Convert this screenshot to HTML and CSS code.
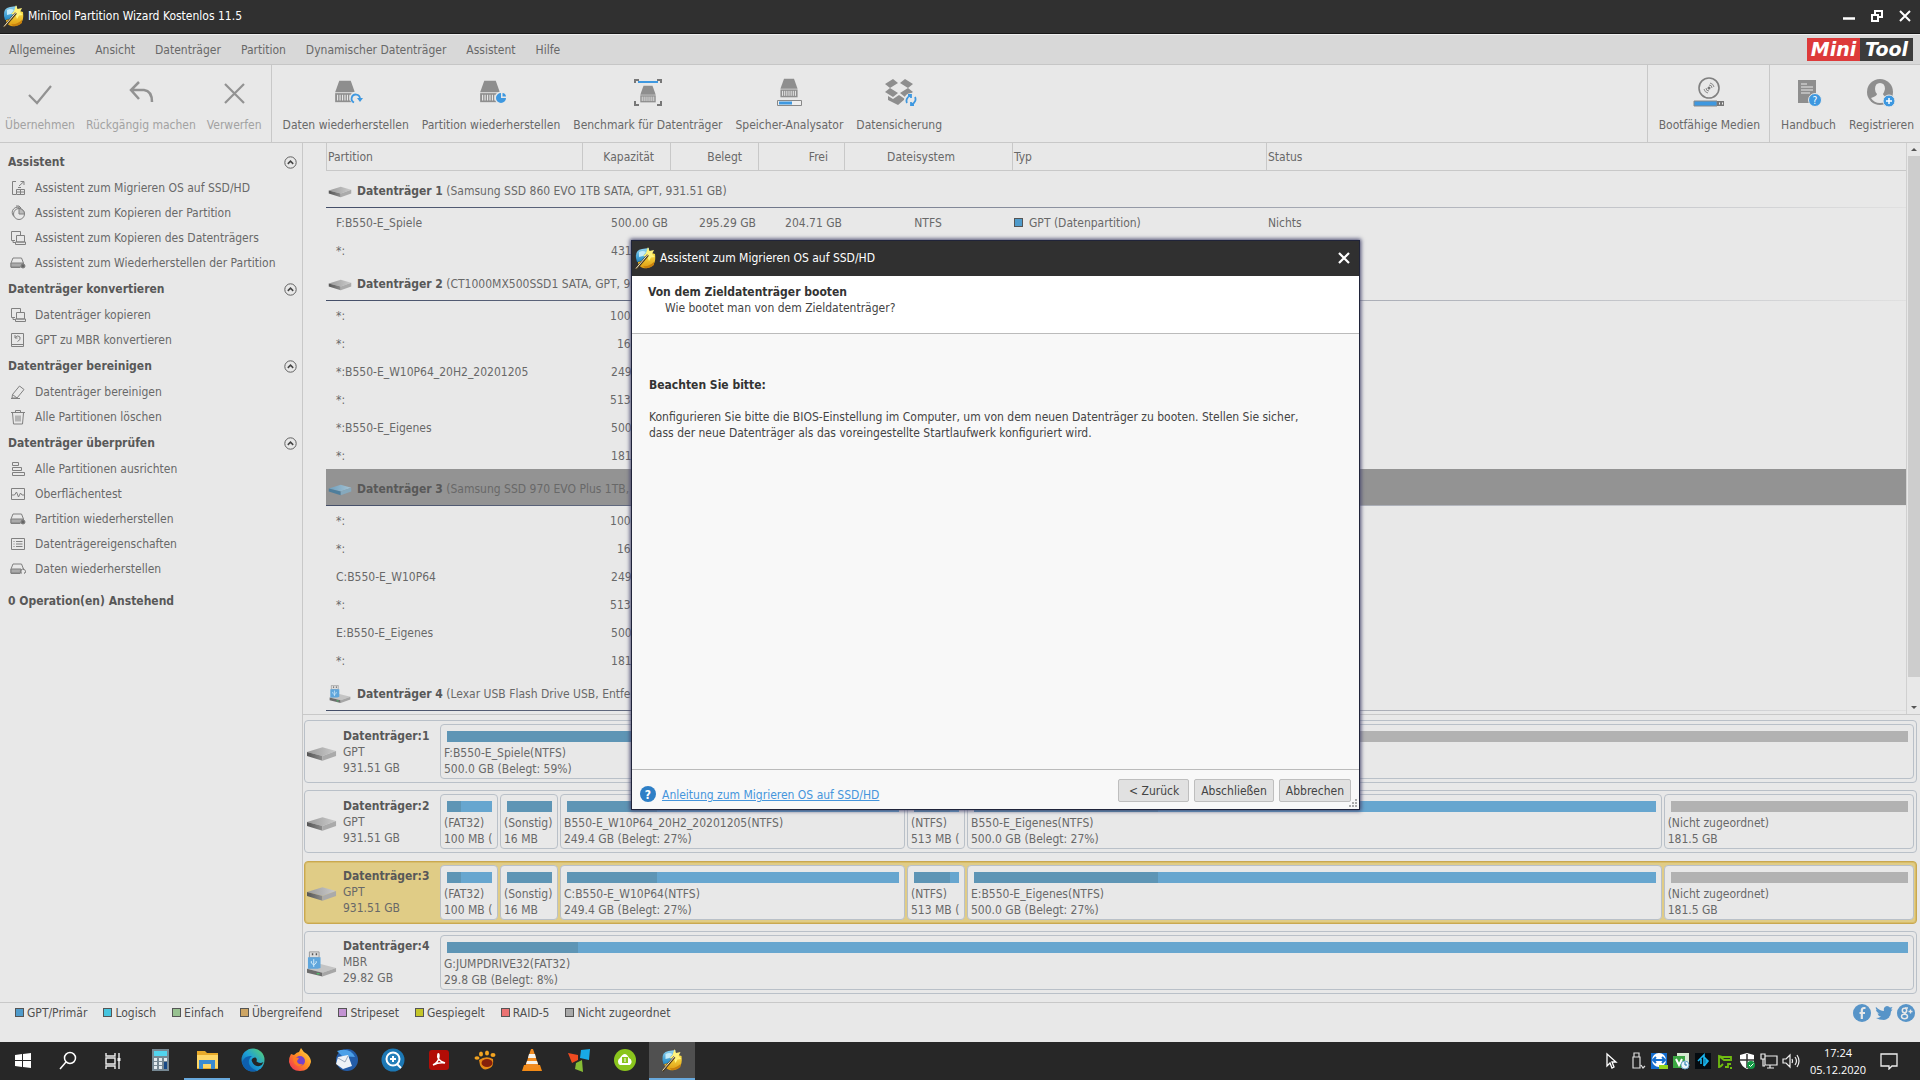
FILE: index.html
```
<!DOCTYPE html>
<html lang="de">
<head>
    <meta charset="UTF-8">
    <meta name="viewport" content="width=device-width, initial-scale=1.0">
    <title>MiniTool Partition Wizard Kostenlos 11.5</title>
    <link rel="stylesheet" href="styles.css">
</head>
<body>
    <!-- Shared icons -->
    <svg class="sprite" aria-hidden="true">
        <defs>
            <linearGradient id="metal" x1="0" x2="1"><stop offset="0" stop-color="#9a9a9a"/><stop offset="1" stop-color="#cbcbcb"/></linearGradient>
            <linearGradient id="metal-side" x1="0" x2="1"><stop offset="0" stop-color="#555"/><stop offset="1" stop-color="#8c8c8c"/></linearGradient>
            <linearGradient id="bluedisk" x1="0" x2="1"><stop offset="0" stop-color="#6f9fbd"/><stop offset="1" stop-color="#a5c3d4"/></linearGradient>
            <linearGradient id="globe" x1="0" y1="0" x2="0" y2="1"><stop offset="0" stop-color="#8fd4f2"/><stop offset="1" stop-color="#1f87c4"/></linearGradient>
            <linearGradient id="gold" x1="0" y1="0" x2="0" y2="1"><stop offset="0" stop-color="#ffe94f"/><stop offset="1" stop-color="#dd9a10"/></linearGradient>
            <linearGradient id="edgefill" x1="0" y1="1" x2="1" y2="0"><stop offset="0" stop-color="#0c59a4"/><stop offset="0.5" stop-color="#1d9fd8"/><stop offset="1" stop-color="#5fd668"/></linearGradient>
            <linearGradient id="firefill" x1="1" y1="0" x2="0" y2="1"><stop offset="0" stop-color="#ffe14a"/><stop offset="0.5" stop-color="#ff8a1f"/><stop offset="1" stop-color="#f0245f"/></linearGradient>
        </defs>
        <symbol id="app" viewBox="0 0 21 24">
            <path d="M1 12Q0 4 7 3l7-1-1 7-6 6-5 1z" fill="url(#globe)"/>
            <path d="M4 6q4-2 7 0l-3 4-4 1z" fill="#c5ecfa"/>
            <path d="M13 6l7 2q1 8-2 11-4 4-10 3-5-2-5-6l6-1z" fill="url(#gold)"/>
            <path d="M8 20q6 1 11-4v3q-4 4-9 3z" fill="#c8810e"/>
            <path d="M13 1l1.500 4L19 4l-2 4 3 3-4 .500-2 3.500-1.500-4L8 10l3-3z" fill="#fff37c"/>
            <path d="M1 23L13 9" stroke="#4a3a1d" stroke-width="2.400"/>
            <path d="M1 22.500L13 8.500" stroke="#efe6cc" stroke-width="1"/>
        </symbol>
        <symbol id="hdd" viewBox="0 0 32 16">
            <path d="M1 6L17 1l14 4-14 5z" fill="url(#metal)"/>
            <path d="M1 6l16 4v5L1 10z" fill="url(#metal-side)"/>
            <path d="M17 10l14-5v5l-14 5z" fill="#aaa"/>
        </symbol>
        <symbol id="hdd-blue" viewBox="0 0 32 16">
            <path d="M1 6L17 1l14 4-14 5z" fill="url(#bluedisk)"/>
            <path d="M1 6l16 4v5L1 10z" fill="#4e7e9c"/>
            <path d="M17 10l14-5v5l-14 5z" fill="#86a9bd"/>
        </symbol>
        <symbol id="usb-disk" viewBox="0 0 32 26">
            <path d="M1 18l14-5 16 4-14 5z" fill="#c4c4c4"/>
            <path d="M1 18l16 4v4L1 22z" fill="#6d6d6d"/>
            <path d="M17 22l14-5v4l-14 5z" fill="#a6a6a6"/>
            <path d="M11 23h3" stroke="#53b96b" stroke-width="1.500"/>
            <path d="M3.500.500h10v6h-10z" fill="#ddd" stroke="#999"/>
            <path d="M6 3h1.500M10 3h1.500" stroke="#555" stroke-width="2"/>
            <path d="M2 6h13v11l-3 1H2z" fill="#5fa6dc"/>
            <path d="M8 8v8M5.500 10v2l2.500 2 2.500-2v-2" fill="none" stroke="#d5ecfa"/>
        </symbol>
        <symbol id="up" viewBox="0 0 13 13">
            <circle cx="6.500" cy="6.500" r="5.700" fill="none" stroke="#606060"/>
            <path d="M3.800 7.800l2.700-2.600 2.700 2.600" fill="none" stroke="#444" stroke-width="1.600"/>
        </symbol>
        <symbol id="i-migrate" viewBox="0 0 16 16">
            <path d="M6 1.500H2.500v13H6M9 6l5-4.500M10.500 1.500H14v3.500M6.500 9.500h8v5h-8zM6.500 12h8M10.500 9.500v5M8 7.500h3" fill="none"/>
        </symbol>
        <symbol id="i-pie" viewBox="0 0 16 16">
            <path d="M4 11.500A5 5 0 1 1 11 3.500" fill="none"/>
            <circle cx="9" cy="9" r="5.500" fill="none"/>
            <path d="M9 3.500V9h5.500A5.500 5.500 0 0 0 9 3.500M6 1h3l2 2" fill="#bbb"/>
        </symbol>
        <symbol id="i-copy" viewBox="0 0 16 16">
            <path d="M5 10.500H1.500v-9h9V5M3 10.500v2h3" fill="none"/>
            <path d="M6.500 5.500h8v6.500h-8zM5.500 12h10v2.500h-10z" fill="none"/>
        </symbol>
        <symbol id="i-restore" viewBox="0 0 16 16">
            <path d="M1 8l2-5h8.500l2 5v1M1 8v4.500h9" fill="none"/>
            <path d="M1 8h12v4H1z" fill="#aaa"/>
            <circle cx="13" cy="11" r="2" fill="#666"/>
        </symbol>
        <symbol id="i-data" viewBox="0 0 16 16">
            <path d="M1 8l2-5h8.500l2 5v1M1 8v4.500h9" fill="none"/>
            <path d="M1 8h10v4H1z" fill="#aaa"/>
            <path d="M11.500 12.500a2.500 2.500 0 1 1 3 0l1-2" fill="none"/>
        </symbol>
        <symbol id="i-mbr" viewBox="0 0 16 16">
            <path d="M1.500 1.500h12v13h-12zM1.500 12.500h12M5 5.500q3-3 5-.500 1 3-2.500 4.500M5 3v3h2.500" fill="none"/>
        </symbol>
        <symbol id="i-erase" viewBox="0 0 16 16">
            <path d="M2.500 10.500l7-8.500 4.500 3.500-7 8.500H2l.500-3.500 4.500 3.500M1 14.500h9" fill="none"/>
        </symbol>
        <symbol id="i-trash" viewBox="0 0 16 16">
            <path d="M1 3.500h14M5.500 3V1.500h5V3M2.500 4l1 11h9l1-11M6 6.500v6M8 6.500v6M10 6.500v6" fill="none"/>
        </symbol>
        <symbol id="i-align" viewBox="0 0 16 16">
            <path d="M2.500 1.500h6v3h-6zM2.500 6.500h9v3h-9zM2.500 11.500h12v3h-12z" fill="none"/>
        </symbol>
        <symbol id="i-surface" viewBox="0 0 16 16">
            <path d="M1.500 2.500h13v11h-13zM1.500 9h3l2-3 2 5 2-4 1.500 2h2.500" fill="none"/>
        </symbol>
        <symbol id="i-props" viewBox="0 0 16 16">
            <path d="M1.500 2.500h13v11h-13zM3.500 5.500h1M6 5.500h6.500M3.500 8h1M6 8h6.500M3.500 10.500h1M6 10.500h6.500" fill="none"/>
        </symbol>
        <symbol id="disk-body" viewBox="0 0 26 28">
            <path d="M6 1h14l5 14H1z" fill="#8e8e8e"/>
            <path d="M1 16h24v11H1z" fill="#8e8e8e"/>
            <path d="M4 18v7M7 18v7M10 18v7M13 18v7M16 18v7M19 18v7M22 18v7" stroke="#e8e8e8" stroke-width="1.400"/>
        </symbol>
    </svg>

    <!-- Main window -->
    <div class="window">
        <header class="title-bar">
            <svg class="title-icon"><use href="#app"/></svg>
            <h1>MiniTool Partition Wizard Kostenlos 11.5</h1>
            <div class="window-buttons">
                <button aria-label="Minimieren"><svg viewBox="0 0 14 14"><path d="M1 9.500h12" stroke="#fff" stroke-width="2.500"/></svg></button>
                <button aria-label="Wiederherstellen"><svg viewBox="0 0 14 14"><path d="M2 6h6v6H2zM5 5V2h7v6H9" fill="none" stroke="#fff" stroke-width="2"/></svg></button>
                <button aria-label="Schließen"><svg viewBox="0 0 14 14"><path d="M2 2l10 10M12 2L2 12" stroke="#fff" stroke-width="2"/></svg></button>
            </div>
        </header>

        <nav class="menu-bar">
            <button>Allgemeines</button>
            <button>Ansicht</button>
            <button>Datenträger</button>
            <button>Partition</button>
            <button>Dynamischer Datenträger</button>
            <button>Assistent</button>
            <button>Hilfe</button>
            <div class="brand"><span class="brand-red">Mini</span><span class="brand-dark">Tool</span></div>
        </nav>

        <div class="toolbar">
            <div class="tool-group">
                <button class="tool" disabled><svg viewBox="0 0 36 36"><path d="M7 20l8 8L29 11" fill="none" stroke="#929292" stroke-width="2.200"/></svg>Übernehmen</button>
                <button class="tool" disabled><svg viewBox="0 0 36 36"><path d="M16 7l-8 8 8 9M9 15h12q8 1 8 12" fill="none" stroke="#929292" stroke-width="2.500"/></svg>Rückgängig machen</button>
                <button class="tool" disabled><svg viewBox="0 0 36 36"><path d="M9 9l19 19M28 9L9 28" stroke="#929292" stroke-width="2.200"/></svg>Verwerfen</button>
            </div>
            <div class="tool-group tool-group-disk">
                <button class="tool"><svg viewBox="0 0 36 36"><use href="#disk-body" x="4" y="5" width="26" height="23"/><circle cx="28" cy="23" r="6.500" fill="#e8e8e8"/><path d="M26 27.500a4.200 4.200 0 1 1 6-4" fill="none" stroke="#3e98e0" stroke-width="1.800"/><path d="M29 23h6l-3 4z" fill="#3e98e0"/></svg>Daten wiederherstellen</button>
                <button class="tool"><svg viewBox="0 0 36 36"><use href="#disk-body" x="4" y="5" width="26" height="23"/><circle cx="28" cy="23" r="6.500" fill="#e8e8e8"/><path d="M28 23v-5a5 5 0 1 0 5 5z" fill="#3e98e0"/><path d="M29.500 21.500V18a4 4 0 0 1 3.500 3.500z" fill="#3e98e0"/></svg>Partition wiederherstellen</button>
                <button class="tool"><svg viewBox="0 0 36 36"><use href="#disk-body" x="6" y="10" width="24" height="18"/><path d="M5 8V5h4M27 5h4v3M5 26v4h4M27 30h4v-4" fill="none" stroke="#777" stroke-width="2"/><path d="M8 7h20" stroke="#3e98e0" stroke-width="2"/></svg>Benchmark für Datenträger</button>
                <button class="tool"><svg viewBox="0 0 36 36"><use href="#disk-body" x="5" y="3" width="26" height="20"/><path d="M6.500 25.500h24v5h-24z" fill="#eee" stroke="#888"/><path d="M8 28h13" stroke="#3e98e0" stroke-width="3"/></svg>Speicher-Analysator</button>
                <button class="tool"><svg viewBox="0 0 36 36"><path d="M4 9l8-5 5 4-8 5zM19 8l5-4 8 5-5 4zM4 17l5-4 8 5-5 4zM27 13l5 4-8 5-5-4zM7 21l5 3 6-4 6 4-7 6-10-5z" fill="#8e8e8e"/><circle cx="30" cy="25" r="7" fill="#e8e8e8"/><path d="M26 28a5 5 0 0 1 3-7M34 22a5 5 0 0 1-3 7M27 20h3v3M33 30h-3v-3" fill="none" stroke="#3e98e0" stroke-width="1.800"/></svg>Datensicherung</button>
            </div>
            <div class="tool-group tool-group-media">
                <button class="tool"><svg viewBox="0 0 36 36"><circle cx="18" cy="13" r="10" fill="none" stroke="#808080" stroke-width="1.600"/><circle cx="18" cy="13" r="1.500" fill="#777"/><path d="M13 14a5 5 0 0 0 4 4M19 8a5 5 0 0 1 4 4M18 10a3 3 0 0 1 3 3M15 13a3 3 0 0 0 3 3" fill="none" stroke="#888"/><path d="M3 26h23v5H3z" fill="#3e98e0" stroke="#888"/><path d="M26 26h7v5h-7z" fill="#777"/><path d="M28 28.500h1M31 28.500h1" stroke="#eee" stroke-width="2"/></svg>Bootfähige Medien</button>
            </div>
            <div class="tool-group tool-group-help">
                <button class="tool"><svg viewBox="0 0 36 36"><path d="M8 5h18v23H8z" fill="#8e8e8e"/><path d="M11 9h6M11 12h12M11 15h12M11 18h9" stroke="#e8e8e8"/><circle cx="25" cy="25" r="6.500" fill="#3e98e0" stroke="#e8e8e8"/><text x="25" y="29" text-anchor="middle" font-size="10" fill="#fff">?</text></svg>Handbuch</button>
                <button class="tool"><svg viewBox="0 0 36 36"><circle cx="17" cy="17" r="13" fill="#8e8e8e"/><path d="M17 8q5 0 5 6-1 4-2 5 0 2 6 4-3 5-9 5t-9-5q6-2 6-4-2-2-2-5 0-6 5-6z" fill="#e8e8e8"/><circle cx="26" cy="26" r="6" fill="#3e98e0" stroke="#e8e8e8"/><path d="M23 26h6M26 23v6" stroke="#fff" stroke-width="1.500"/></svg>Registrieren</button>
            </div>
        </div>

        <div class="workspace">
            <!-- Action list -->
            <aside class="sidebar">
                <section>
                    <h2>Assistent <svg><use href="#up"/></svg></h2>
                    <button><svg><use href="#i-migrate"/></svg>Assistent zum Migrieren OS auf SSD/HD</button>
                    <button><svg><use href="#i-pie"/></svg>Assistent zum Kopieren der Partition</button>
                    <button><svg><use href="#i-copy"/></svg>Assistent zum Kopieren des Datenträgers</button>
                    <button><svg><use href="#i-restore"/></svg>Assistent zum Wiederherstellen der Partition</button>
                </section>
                <section>
                    <h2>Datenträger konvertieren <svg><use href="#up"/></svg></h2>
                    <button><svg><use href="#i-copy"/></svg>Datenträger kopieren</button>
                    <button><svg><use href="#i-mbr"/></svg>GPT zu MBR konvertieren</button>
                </section>
                <section>
                    <h2>Datenträger bereinigen <svg><use href="#up"/></svg></h2>
                    <button><svg><use href="#i-erase"/></svg>Datenträger bereinigen</button>
                    <button><svg><use href="#i-trash"/></svg>Alle Partitionen löschen</button>
                </section>
                <section>
                    <h2>Datenträger überprüfen <svg><use href="#up"/></svg></h2>
                    <button><svg><use href="#i-align"/></svg>Alle Partitionen ausrichten</button>
                    <button><svg><use href="#i-surface"/></svg>Oberflächentest</button>
                    <button><svg><use href="#i-restore"/></svg>Partition wiederherstellen</button>
                    <button><svg><use href="#i-props"/></svg>Datenträgereigenschaften</button>
                    <button><svg><use href="#i-data"/></svg>Daten wiederherstellen</button>
                </section>
                <p class="pending">0 Operation(en) Anstehend</p>
            </aside>

            <main class="content">
                <!-- Partition list -->
                <div class="list">
                    <table class="partitions">
                        <colgroup>
                            <col class="c-name"><col class="c-size"><col class="c-size"><col class="c-free"><col class="c-fs"><col class="c-type"><col>
                        </colgroup>
                        <thead>
                            <tr><th>Partition</th><th class="num">Kapazität</th><th class="num">Belegt</th><th class="num">Frei</th><th class="fs">Dateisystem</th><th>Typ</th><th>Status</th></tr>
                        </thead>
                        <tbody>
                            <tr class="disk"><th colspan="7"><svg><use href="#hdd"/></svg><b>Datenträger 1</b> (Samsung SSD 860 EVO 1TB SATA, GPT, 931.51 GB)</th></tr>
                            <tr><td>F:B550-E_Spiele</td><td class="num">500.00 GB</td><td class="num">295.29 GB</td><td class="num">204.71 GB</td><td class="fs">NTFS</td><td class="type"><i class="swatch primary"></i>GPT (Datenpartition)</td><td>Nichts</td></tr>
                            <tr><td>*:</td><td class="num">431.51 GB</td><td></td><td></td><td></td><td></td><td></td></tr>
                            <tr class="disk"><th colspan="7"><svg><use href="#hdd"/></svg><b>Datenträger 2</b> (CT1000MX500SSD1 SATA, GPT, 931.51 GB)</th></tr>
                            <tr><td>*:</td><td class="num">100.00 MB</td><td></td><td></td><td></td><td></td><td></td></tr>
                            <tr><td>*:</td><td class="num">16.00 MB</td><td></td><td></td><td></td><td></td><td></td></tr>
                            <tr><td>*:B550-E_W10P64_20H2_20201205</td><td class="num">249.40 GB</td><td></td><td></td><td></td><td></td><td></td></tr>
                            <tr><td>*:</td><td class="num">513.00 MB</td><td></td><td></td><td></td><td></td><td></td></tr>
                            <tr><td>*:B550-E_Eigenes</td><td class="num">500.00 GB</td><td></td><td></td><td></td><td></td><td></td></tr>
                            <tr><td>*:</td><td class="num">181.50 GB</td><td></td><td></td><td></td><td></td><td></td></tr>
                            <tr class="disk selected"><th colspan="7"><svg><use href="#hdd-blue"/></svg><b>Datenträger 3</b> (Samsung SSD 970 EVO Plus 1TB, GPT, 931.51 GB)</th></tr>
                            <tr><td>*:</td><td class="num">100.00 MB</td><td></td><td></td><td></td><td></td><td></td></tr>
                            <tr><td>*:</td><td class="num">16.00 MB</td><td></td><td></td><td></td><td></td><td></td></tr>
                            <tr><td>C:B550-E_W10P64</td><td class="num">249.40 GB</td><td></td><td></td><td></td><td></td><td></td></tr>
                            <tr><td>*:</td><td class="num">513.00 MB</td><td></td><td></td><td></td><td></td><td></td></tr>
                            <tr><td>E:B550-E_Eigenes</td><td class="num">500.00 GB</td><td></td><td></td><td></td><td></td><td></td></tr>
                            <tr><td>*:</td><td class="num">181.50 GB</td><td></td><td></td><td></td><td></td><td></td></tr>
                            <tr class="disk"><th colspan="7"><svg class="usb"><use href="#usb-disk"/></svg><b>Datenträger 4</b> (Lexar USB Flash Drive USB, Entfernbar, MBR, 29.82 GB)</th></tr>
                        </tbody>
                    </table>
                    <div class="scrollbar">
                        <svg viewBox="0 0 6 4"><path d="M0 4l3-3 3 3z" fill="#555"/></svg>
                        <div class="thumb"></div>
                        <svg viewBox="0 0 6 4"><path d="M0 0l3 3 3-3z" fill="#555"/></svg>
                    </div>
                </div>

                <!-- Disk map -->
                <div class="disk-map">
                    <div class="drive">
                        <svg><use href="#hdd"/></svg>
                        <div class="drive-info"><b>Datenträger:1</b><br>GPT<br>931.51 GB</div>
                        <div class="blocks">
                            <div class="block" style="flex-grow: 500"><div class="bar"><div class="used" style="width: 59%"></div></div>F:B550-E_Spiele(NTFS)<br>500.0 GB (Belegt: 59%)</div>
                            <div class="block" style="flex-grow: 431"><div class="bar free"></div>(Nicht zugeordnet)<br>431.5 GB</div>
                        </div>
                    </div>
                    <div class="drive">
                        <svg><use href="#hdd"/></svg>
                        <div class="drive-info"><b>Datenträger:2</b><br>GPT<br>931.51 GB</div>
                        <div class="blocks">
                            <div class="block small"><div class="bar"><div class="used" style="width: 30%"></div></div>(FAT32)<br>100 MB (</div>
                            <div class="block small"><div class="bar"><div class="used" style="width: 100%"></div></div>(Sonstig)<br>16 MB</div>
                            <div class="block" style="flex-grow: 245"><div class="bar"><div class="used" style="width: 27%"></div></div>B550-E_W10P64_20H2_20201205(NTFS)<br>249.4 GB (Belegt: 27%)</div>
                            <div class="block small"><div class="bar"><div class="used" style="width: 81%"></div></div>(NTFS)<br>513 MB (</div>
                            <div class="block" style="flex-grow: 500"><div class="bar"><div class="used" style="width: 27%"></div></div>B550-E_Eigenes(NTFS)<br>500.0 GB (Belegt: 27%)</div>
                            <div class="block" style="flex-grow: 176"><div class="bar free"></div>(Nicht zugeordnet)<br>181.5 GB</div>
                        </div>
                    </div>
                    <div class="drive active">
                        <svg><use href="#hdd"/></svg>
                        <div class="drive-info"><b>Datenträger:3</b><br>GPT<br>931.51 GB</div>
                        <div class="blocks">
                            <div class="block small"><div class="bar"><div class="used" style="width: 30%"></div></div>(FAT32)<br>100 MB (</div>
                            <div class="block small"><div class="bar"><div class="used" style="width: 100%"></div></div>(Sonstig)<br>16 MB</div>
                            <div class="block" style="flex-grow: 245"><div class="bar"><div class="used" style="width: 27%"></div></div>C:B550-E_W10P64(NTFS)<br>249.4 GB (Belegt: 27%)</div>
                            <div class="block small"><div class="bar"><div class="used" style="width: 81%"></div></div>(NTFS)<br>513 MB (</div>
                            <div class="block" style="flex-grow: 500"><div class="bar"><div class="used" style="width: 27%"></div></div>E:B550-E_Eigenes(NTFS)<br>500.0 GB (Belegt: 27%)</div>
                            <div class="block" style="flex-grow: 176"><div class="bar free"></div>(Nicht zugeordnet)<br>181.5 GB</div>
                        </div>
                    </div>
                    <div class="drive">
                        <svg class="usb"><use href="#usb-disk"/></svg>
                        <div class="drive-info"><b>Datenträger:4</b><br>MBR<br>29.82 GB</div>
                        <div class="blocks">
                            <div class="block" style="flex-grow: 1"><div class="bar"><div class="used" style="width: 9%"></div></div>G:JUMPDRIVE32(FAT32)<br>29.8 GB (Belegt: 8%)</div>
                        </div>
                    </div>
                </div>
            </main>
        </div>

        <footer class="status-bar">
            <ul class="legend">
                <li><i class="swatch primary"></i>GPT/Primär</li>
                <li><i class="swatch logical"></i>Logisch</li>
                <li><i class="swatch simple"></i>Einfach</li>
                <li><i class="swatch spanned"></i>Übergreifend</li>
                <li><i class="swatch striped"></i>Stripeset</li>
                <li><i class="swatch mirrored"></i>Gespiegelt</li>
                <li><i class="swatch raid"></i>RAID-5</li>
                <li><i class="swatch unallocated"></i>Nicht zugeordnet</li>
            </ul>
            <div class="social">
                <a href="#" aria-label="Facebook"><svg viewBox="0 0 18 18"><circle cx="9" cy="9" r="9" fill="#5794c8"/><path d="M12.500 4H11Q8.800 4 8.800 6.500V15M6.500 9h5.500" fill="none" stroke="#e8e8e8" stroke-width="2.200"/></svg></a>
                <a href="#" aria-label="Twitter"><svg viewBox="0 0 18 18"><path d="M1 3q4 4 8 4-1-4 3-5 2 0 3 1.500L17.500 3 16 5.500l1.500 0L16 7.500q0 7-7 8.500-5 0-8-2 3 0 5-1.500-3-.500-3.500-3h2Q1 8 1 5.500l1.500.500Q0 5 1 3z" fill="#5794c8"/></svg></a>
                <a href="#" aria-label="Google+"><svg viewBox="0 0 18 18"><circle cx="9" cy="9" r="9" fill="#5794c8"/><circle cx="7.500" cy="6.500" r="2.200" fill="none" stroke="#e8e8e8" stroke-width="1.500"/><ellipse cx="7.500" cy="12.500" rx="3" ry="2.200" fill="none" stroke="#e8e8e8" stroke-width="1.500"/><path d="M8 4h3M7 8.500l2 2M11.500 7.500h4M13.500 5.500v4" stroke="#e8e8e8" stroke-width="1.300"/></svg></a>
            </div>
        </footer>

        <!-- Wizard window -->
        <section class="wizard" role="dialog" aria-labelledby="wizard-title">
            <div class="wizard-title">
                <svg class="title-icon"><use href="#app"/></svg>
                <h2 id="wizard-title">Assistent zum Migrieren OS auf SSD/HD</h2>
                <button aria-label="Schließen"><svg viewBox="0 0 14 14"><path d="M2 2l10 10M12 2L2 12" stroke="#fff" stroke-width="2.200"/></svg></button>
            </div>
            <div class="wizard-head">
                <h3>Von dem Zieldatenträger booten</h3>
                <p>Wie bootet man von dem Zieldatenträger?</p>
            </div>
            <div class="wizard-body">
                <h3>Beachten Sie bitte:</h3>
                <p>Konfigurieren Sie bitte die BIOS-Einstellung im Computer, um von dem neuen Datenträger zu booten. Stellen Sie sicher, dass der neue Datenträger als das voreingestellte Startlaufwerk konfiguriert wird.</p>
            </div>
            <div class="wizard-foot">
                <svg class="help" viewBox="0 0 16 16"><circle cx="8" cy="8" r="8" fill="#2e7fc6"/><text x="8" y="12.500" text-anchor="middle" font-size="12" font-weight="bold" fill="#fff">?</text></svg>
                <a href="#">Anleitung zum Migrieren OS auf SSD/HD</a>
                <div class="wizard-buttons">
                    <button>&lt; Zurück</button>
                    <button>Abschließen</button>
                    <button>Abbrechen</button>
                </div>
                <svg class="grip" viewBox="0 0 8 8"><path d="M6 0h2v2H6zM6 3h2v2H6zM3 3h2v2H3zM6 6h2v2H6zM3 6h2v2H3zM0 6h2v2H0z" fill="#aaa"/></svg>
            </div>
        </section>
    </div>

    <!-- Taskbar -->
    <div class="taskbar">
        <div class="task-start">
            <button aria-label="Start"><svg viewBox="0 0 24 24"><path d="M4 6l7-1v6H4zM12 5l8-1v7h-8zM4 12h7v6l-7-1zM12 12h8v7l-8-1z" fill="#fff"/></svg></button>
            <button aria-label="Suche"><svg viewBox="0 0 24 24"><circle cx="14" cy="9" r="5.500" fill="none" stroke="#fff" stroke-width="1.500"/><path d="M10 13l-6 7" stroke="#fff" stroke-width="1.500"/></svg></button>
            <button aria-label="Taskansicht"><svg viewBox="0 0 24 24"><path d="M5 4v3h9V4M5 9h9v6H5zM5 20v-3h9v3M18 4v16" fill="none" stroke="#eee" stroke-width="1.400"/><path d="M16.500 9h3v3h-3z" fill="#eee"/></svg></button>
        </div>
        <div class="task-apps">
            <button aria-label="Rechner"><svg viewBox="0 0 24 24"><path d="M4 1h17v22H4z" fill="#768893"/><path d="M6 3h13v5H6z" fill="#52d4ee"/><path d="M6 10h3v3H6zM11 10h3v3h-3zM6 14h3v3H6zM11 14h3v3h-3zM6 18h3v3H6zM11 18h3v3h-3zM16 10h3v3h-3z" fill="#e3ebef"/><path d="M16 14h3v7h-3z" fill="#184a86"/></svg></button>
            <button class="open" aria-label="Explorer"><svg viewBox="0 0 24 24"><path d="M2 3h8l2 2h11v16H2z" fill="#e8aa2a"/><path d="M2 7h21v13H2z" fill="#ffd767"/><path d="M4 12h16v9h-4v-5H8v5H4z" fill="#3b8bd2"/></svg></button>
            <button aria-label="Edge"><svg viewBox="0 0 24 24"><circle cx="12" cy="12" r="11.500" fill="url(#edgefill)"/><path d="M1 14q3-7 10-6-4 3-3 8 2 5 8 6.500Q4 26 1 14z" fill="#0e5fae"/><path d="M10.500 12q1-3 4-2.500 2 1 1 4 3 2.500 7 .500-1 3-4 4-6 1-8-6z" fill="#252525"/></svg></button>
            <button aria-label="Firefox"><svg viewBox="0 0 24 24"><path d="M3 6l3 1q3-3 5-3l2-4q2 4 6 6 4 4 4 8-2 9-11 9T1 14Q1 9 3 6z" fill="url(#firefill)"/><circle cx="12" cy="13" r="5" fill="#7542c9"/><path d="M5 9l6 1-2 3q1 4 6 3-3 4-7 1-3-2-3-8z" fill="#ff7a25"/></svg></button>
            <button aria-label="Thunderbird"><svg viewBox="0 0 24 24"><circle cx="13" cy="12" r="11" fill="#235ca8"/><path d="M3 3q13-4 18 6L8 8z" fill="#4ba0e8"/><path d="M4 9l10-2 4 11-9 3-7-5z" fill="#edf2f7"/><path d="M4 10l7 4 3-6" fill="none" stroke="#9aa9bc"/></svg></button>
            <button aria-label="Suchprogramm"><svg viewBox="0 0 24 24"><circle cx="12" cy="12" r="11.500" fill="#1c78b5"/><circle cx="12" cy="11" r="6.500" fill="#257fba" stroke="#fff" stroke-width="2"/><path d="M9 11h6M12 8v6M16 16l4 4" stroke="#fff" stroke-width="2"/></svg></button>
            <button aria-label="Acrobat"><svg viewBox="0 0 24 24"><rect x="2" y="2" width="20" height="20" rx="3" fill="#b20c06"/><path d="M6 17q6-3 6-9 0-3-1-2-2 6 7 9-6-1-12 2z" fill="none" stroke="#fff" stroke-width="1.500"/></svg></button>
            <button aria-label="GIMP"><svg viewBox="0 0 24 24"><path d="M5 12q7-5 14-1 1 7-3 9-7 4-10-3z" fill="#e78b16"/><ellipse cx="13" cy="15" rx="5.500" ry="4" fill="#85200b"/><ellipse cx="3" cy="10" rx="2.500" ry="1.800" fill="#f3a421"/><ellipse cx="7" cy="6" rx="2" ry="2.500" fill="#f3a421"/><ellipse cx="13" cy="5" rx="2" ry="2.500" fill="#f3a421"/><ellipse cx="19" cy="7" rx="2.500" ry="2" fill="#f3a421"/></svg></button>
            <button aria-label="VLC"><svg viewBox="0 0 24 24"><path d="M4 17h16l2 6H2z" fill="#f28a16"/><path d="M11 1h2l6 18q-7 3-14 0z" fill="#f18b20"/><path d="M9 6h6l1 4H8zM7 13h10l1 3H6z" fill="#f5f1e9"/></svg></button>
            <button aria-label="Bildprogramm"><svg viewBox="0 0 24 24"><path d="M14 2l9-1-1 11-9-2z" fill="#18a9e6"/><path d="M1 5l10 2 0 5-6 3z" fill="#ef4b20"/><path d="M9 15l6-3 1 12-8-3z" fill="#87bd35"/></svg></button>
            <button aria-label="Cloudsicherung"><svg viewBox="0 0 24 24"><circle cx="12" cy="12" r="11" fill="#8ac51d"/><path d="M7 17a4 4 0 0 1 0-7q5-8 9 0a4 4 0 0 1 1 7z" fill="#fff"/><path d="M9 9h6v6H9z" fill="#8ac51d"/><path d="M11 11h2M11 13h2" stroke="#fff"/></svg></button>
            <button class="open current" aria-label="MiniTool"><svg viewBox="0 0 24 24"><use href="#app"/></svg></button>
        </div>
        <div class="tray">
            <svg class="pointer" viewBox="0 0 18 18"><path d="M5 2v12l3-3 2 5 2-1-2-5h4z" fill="none" stroke="#fff" stroke-width="1.300"/></svg>
            <svg viewBox="0 0 18 18"><path d="M5 5h7v11H5zM6 5V1h5v4M13 13l2 3 2-2" fill="none" stroke="#ddd" stroke-width="1.200"/></svg>
            <svg viewBox="0 0 18 18"><path d="M1 1h16v16H1z" fill="#126cce"/><circle cx="9" cy="8" r="7" fill="#fff"/><path d="M3 8h12M6 5L3 8l3 3M12 5l3 3-3 3" fill="none" stroke="#126cce" stroke-width="2"/><path d="M9 13h9v4H9z" fill="#91d51d"/></svg>
            <svg viewBox="0 0 18 18"><path d="M5 1h12v12H5z" fill="#d7ead2"/><path d="M1 4h12v12H1z" fill="#3ba642"/><path d="M4 7l3 6 3-6" fill="none" stroke="#fff" stroke-width="2"/><circle cx="13" cy="13" r="4" fill="#eaf5fa" stroke="#6fa8ca"/><path d="M13 10v3h2" fill="none" stroke="#1675ac"/></svg>
            <svg viewBox="0 0 18 18"><path d="M1 1h16v16H1z" fill="#050b10"/><path d="M4 9l6-6v11M7 7v5M10 5l4 4-4 5M12 7v4" fill="none" stroke="#19b5ee" stroke-width="1.600"/></svg>
            <svg viewBox="0 0 18 18"><path d="M3 16V4l4 1h8v4M3 4l5 4h6M4 15l3-3M9 15h3v-3h3M14 16h2" fill="none" stroke="#70bd10" stroke-width="1.800"/></svg>
            <svg viewBox="0 0 18 18"><path d="M9 1l7 2v6q-1 5-7 8-6-3-7-8V3z" fill="#fff"/><path d="M9 2v14M2 8h14" stroke="#333" stroke-width="1.500"/><circle cx="13" cy="13" r="4" fill="#149844"/><path d="M11 13l1.500 1.500 3-3" fill="none" stroke="#fff"/></svg>
            <svg viewBox="0 0 18 18"><path d="M5 4h12v9H5zM10 13v3M7 16h7M1 2h4v5H1zM3 7v7h2" fill="none" stroke="#eee" stroke-width="1.200"/></svg>
            <svg viewBox="0 0 18 18"><path d="M1 7h3l4-4v12l-4-4H1zM10 7q1 2 0 4M13 5q3 4 0 8M15 3q4 6 0 12" fill="none" stroke="#eee" stroke-width="1.200"/></svg>
            <time class="clock">17:24<br>05.12.2020</time>
            <svg class="notice" viewBox="0 0 18 18"><path d="M1 2h16v12h-5l-3 3v-3H1z" fill="none" stroke="#eee" stroke-width="1.300"/></svg>
        </div>
    </div>
</body>
</html>
```
FILE: styles.css
```
* {
    box-sizing: border-box;
}

body {
    display: flex;
    flex-direction: column;
    height: 100vh;
    margin: 0;
    overflow: hidden;
    background-color: #e8e8e8;
    color: #686868;
    font-family: "DejaVu Sans Condensed", "Noto Sans", sans-serif;
    font-size: 12px;
}

h1, h2, h3, p, ul {
    margin: 0;
    padding: 0;
}

button {
    padding: 0;
    border: none;
    background: none;
    color: inherit;
    font: inherit;
}

.sprite {
    position: absolute;
    width: 0;
    height: 0;
}

.window {
    position: relative;
    display: flex;
    flex: 1;
    flex-direction: column;
    min-height: 0;
}

/* Title and menu */
.title-bar {
    display: flex;
    align-items: center;
    height: 34px;
    padding: 0 8px 1px 3px;
    background-color: #303030;
    border-bottom: 1px solid #181818;
    color: #fff;
}

.title-icon {
    width: 21px;
    height: 24px;
    margin-right: 4px;
}

h1, .wizard-title h2 {
    font-size: 12px;
    font-weight: normal;
}

.window-buttons {
    display: flex;
    gap: 14px;
    margin-left: auto;
}

.window-buttons svg, .wizard-title button svg {
    display: block;
    width: 14px;
    height: 14px;
}

.menu-bar {
    display: flex;
    align-items: center;
    gap: 20px;
    height: 31px;
    padding: 0 7px 0 9px;
    background-color: #d8d8d8;
    border-top: 1px solid #f0f0f0;
    border-bottom: 1px solid #c6c6c6;
}

.brand {
    display: flex;
    margin-left: auto;
    color: #fff;
    font-family: "DejaVu Sans", sans-serif;
    font-size: 19px;
    font-style: italic;
    font-weight: bold;
    line-height: 23px;
    text-align: center;
}

.brand-red {
    width: 53px;
    background-color: #dd3a3a;
}

.brand-dark {
    width: 53px;
    background-color: #3c3c3c;
}

/* Toolbar */
.toolbar {
    display: flex;
    height: 78px;
    border-bottom: 1px solid #c8c8c8;
}

.tool-group {
    display: flex;
    gap: 11px;
    padding: 0 9px 0 5px;
}

.tool-group + .tool-group {
    padding-left: 11px;
    border-left: 1px solid #c8c8c8;
}

.tool-group-disk {
    gap: 13px;
}

.tool-group-media {
    margin-left: auto;
}

.tool-group-help {
    gap: 13px;
    padding-right: 6px;
}

.tool {
    display: flex;
    flex-direction: column;
    align-items: center;
    padding-top: 10px;
    line-height: 18px;
    white-space: nowrap;
}

.tool svg {
    width: 36px;
    height: 36px;
    margin-bottom: 5px;
}

.tool:disabled {
    color: #a2a2a2;
}

/* Sidebar */
.workspace {
    display: flex;
    flex: 1;
    min-height: 0;
}

.sidebar {
    width: 303px;
    padding: 6px 5px 0 8px;
    border-right: 1px solid #c8c8c8;
}

.sidebar section {
    padding-bottom: 1px;
}

.sidebar h2 {
    display: flex;
    align-items: center;
    justify-content: space-between;
    height: 26px;
    color: #585858;
    font-size: 12px;
}

.sidebar h2 svg {
    width: 13px;
    height: 13px;
}

.sidebar button {
    display: flex;
    align-items: center;
    gap: 9px;
    width: 100%;
    height: 25px;
    padding-left: 2px;
    white-space: nowrap;
}

.sidebar button svg {
    width: 16px;
    height: 16px;
    stroke: #808080;
}

.pending {
    padding-top: 11px;
    color: #585858;
    font-weight: bold;
    line-height: 16px;
}

/* Partition list */
.content {
    display: flex;
    flex: 1;
    flex-direction: column;
    min-width: 0;
}

.list {
    display: flex;
    flex: 1;
    align-items: flex-start;
    min-height: 0;
    overflow: hidden;
    border-bottom: 1px solid #c8c8c8;
}

.partitions {
    flex: 1;
    margin-left: 23px;
    border-spacing: 0;
    table-layout: fixed;
}

.c-name {
    width: 256px;
}

.c-size {
    width: 88px;
}

.c-free {
    width: 86px;
}

.c-fs {
    width: 168px;
}

.c-type {
    width: 254px;
}

.partitions th {
    padding: 1px 2px 0 1px;
    font-weight: normal;
    text-align: left;
}

.partitions thead th {
    height: 28px;
    border-left: 1px solid #c8c8c8;
    border-bottom: 1px solid #c8c8c8;
}

.partitions .num {
    text-align: right;
}

.partitions thead .num {
    padding-right: 16px;
}

.partitions .fs {
    text-align: center;
}

.partitions thead .fs {
    padding-right: 16px;
}

.partitions td {
    height: 28px;
    padding: 2px 2px 0;
    white-space: nowrap;
}

.partitions td:first-child {
    padding-left: 10px;
}

.partitions .disk th {
    height: 37px;
    padding-top: 4px;
    border-bottom: 1px solid;
    border-image: linear-gradient(to right, #444e68, #e0e0e0) 1;
}

.disk svg {
    width: 24px;
    height: 12px;
    margin-left: 1px;
    margin-right: 5px;
    vertical-align: middle;
}

.disk .usb {
    height: 18px;
}

.disk b {
    color: #585858;
}

.selected {
    background-color: #939393;
}

.swatch {
    display: inline-block;
    width: 9px;
    height: 9px;
    margin-right: 3px;
    border: 1px solid #555;
}

.type .swatch {
    margin-right: 6px;
}

.primary { background-color: #4f9bcb; }
.logical { background-color: #46c5df; }
.simple { background-color: #97c190; }
.spanned { background-color: #cda564; }
.striped { background-color: #c393d3; }
.mirrored { background-color: #c4c629; }
.raid { background-color: #ea7272; }
.unallocated { background-color: #a9a9a9; }

.scrollbar {
    display: flex;
    flex-direction: column;
    align-items: center;
    align-self: stretch;
    gap: 5px;
    width: 14px;
    padding: 4px 0;
    border-left: 1px solid #d0d0d0;
}

.scrollbar svg {
    width: 6px;
    height: 4px;
}

.thumb {
    width: 12px;
    flex: 1;
    margin-bottom: 24px;
    background-color: #cdcdcd;
}

/* Disk map */
.disk-map {
    display: flex;
    flex-direction: column;
    justify-content: space-between;
    height: 287px;
    padding: 5px 3px 8px 1px;
}

.drive {
    display: flex;
    align-items: center;
    height: 63px;
    padding: 0 2px 0 1px;
    border: 1px solid #b9c0c8;
    border-radius: 4px;
    line-height: 16px;
}

.drive > svg {
    width: 31px;
    height: 16px;
    margin-top: 4px;
}

.drive > .usb {
    height: 26px;
}

.drive-info {
    width: 103px;
    padding-left: 6px;
}

.drive-info b {
    color: #585858;
}

.active {
    background-color: #e0cc86;
    border-color: #c9a850;
    box-shadow: inset 0 0 0 1px #d8bd6a;
}

.blocks {
    display: flex;
    flex: 1;
    gap: 2px;
    height: 55px;
}

.block {
    flex-basis: 0;
    min-width: 0;
    padding: 6px 4px 0 3px;
    overflow: hidden;
    background-color: #e8e8e8;
    border: 1px solid #b9c0c8;
    border-radius: 4px;
    white-space: nowrap;
}

.small {
    flex: 0 0 58px;
}

.bar {
    height: 11px;
    margin: 0 1px 3px 3px;
    background-color: #67a6cf;
}

.used {
    height: 100%;
    background-color: #5e95b5;
}

.bar.free {
    background-color: #b2b2b2;
}

/* Status bar */
.status-bar {
    display: flex;
    justify-content: space-between;
    height: 40px;
    padding: 0 5px 0 15px;
    border-top: 1px solid #c8c8c8;
    color: #505050;
    line-height: 21px;
}

.legend {
    display: flex;
    gap: 16px;
    list-style: none;
}

.social {
    display: flex;
    gap: 4px;
    padding-top: 1px;
}

.social svg {
    display: block;
    width: 18px;
    height: 18px;
}

/* Wizard */
.wizard {
    position: absolute;
    left: 631px;
    top: 240px;
    display: flex;
    flex-direction: column;
    width: 729px;
    height: 570px;
    background-color: #f8f8f8;
    border: 1px solid #20243a;
    box-shadow: 0 0 4px 1px #45456c;
    color: #444;
}

.wizard-title {
    display: flex;
    align-items: center;
    height: 35px;
    padding: 0 8px 2px 3px;
    background-color: #303030;
    color: #fff;
}

.wizard-title button {
    margin-left: auto;
}

.wizard h3 {
    color: #333;
    font-size: 12px;
    line-height: 16px;
}

.wizard-head {
    height: 58px;
    padding: 8px 16px;
    background-color: #fff;
    border-bottom: 1px solid #bbb;
    line-height: 16px;
}

.wizard-head p {
    padding-left: 17px;
}

.wizard-body {
    flex: 1;
    padding: 43px 40px 0 17px;
    line-height: 16px;
}

.wizard-body p {
    padding-top: 16px;
}

.wizard-foot {
    display: flex;
    align-items: flex-end;
    height: 40px;
    padding: 0 2px 2px 8px;
    border-top: 1px solid #bbb;
}

.help {
    width: 16px;
    height: 16px;
    margin: 0 6px 5px 0;
}

.wizard-foot a {
    margin-bottom: 4px;
    color: #4595dc;
    line-height: 16px;
}

.wizard-buttons {
    display: flex;
    gap: 5px;
    margin-left: auto;
    margin-bottom: 5px;
}

.wizard-buttons button {
    height: 23px;
    padding: 0 6px;
    background-color: #e1e1e1;
    border: 1px solid #bebebe;
    border-radius: 2px;
}

.wizard-buttons button:first-child {
    padding-left: 10px;
    padding-right: 9px;
}

.grip {
    width: 8px;
    height: 8px;
    margin-left: -2px;
}

/* Taskbar */
.taskbar {
    display: flex;
    height: 38px;
    background-color: #272727;
    color: #fff;
}

.task-start {
    display: flex;
}

.task-start button {
    width: 45px;
}

.task-apps {
    display: flex;
    width: 558px;
    margin-left: 2px;
}

.task-apps button {
    flex: 1;
    border-bottom: 2px solid transparent;
}

.task-apps .open {
    border-bottom-color: #68a9dd;
}

.task-apps .current {
    background-color: #505050;
}

.taskbar button svg {
    display: block;
    width: 24px;
    height: 24px;
    margin: 0 auto;
}

.tray {
    display: flex;
    align-items: center;
    gap: 4px;
    margin-left: auto;
    padding-right: 22px;
}

.tray svg {
    width: 18px;
    height: 18px;
}

.tray .pointer {
    margin-right: 4px;
}

.clock {
    width: 68px;
    font-family: "Open Sans", "Noto Sans", sans-serif;
    font-size: 11px;
    line-height: 17px;
    text-align: center;
}

.tray .notice {
    margin-left: 4px;
}
```
